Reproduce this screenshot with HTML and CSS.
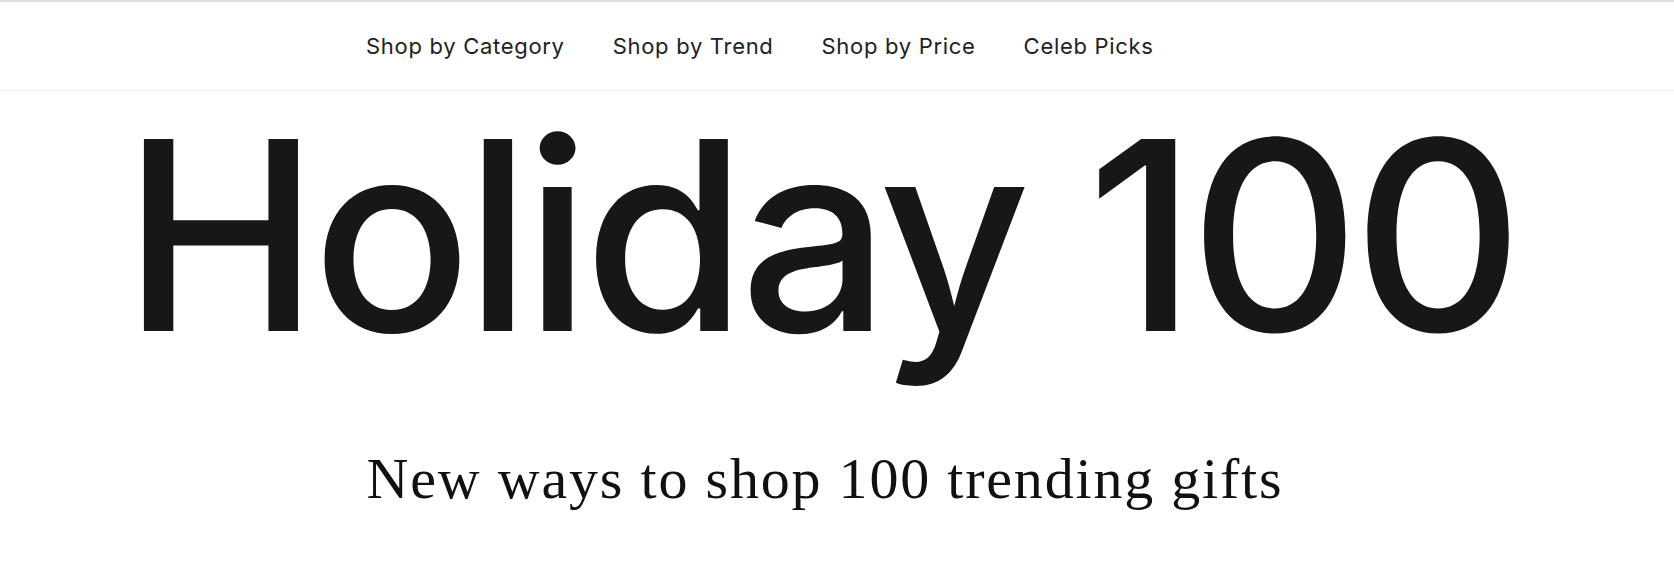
FILE: index.html
```html
<!DOCTYPE html>
<html lang="en">
<head>
    <meta charset="UTF-8">
    <meta name="viewport" content="width=device-width, initial-scale=1.0">
    <title>Holiday 100</title>
    <link rel="stylesheet" href="styles.css">
</head>
<body>
    <header class="topbar">
        <nav>
            <ul class="nav-links">
                <li><a href="#">Shop by Category</a></li>
                <li><a href="#">Shop by Trend</a></li>
                <li><a href="#">Shop by Price</a></li>
                <li><a href="#">Celeb Picks</a></li>
            </ul>
        </nav>
    </header>
    <main class="hero">
        <h1 class="hero-title">Holiday 100</h1>
        <p class="hero-subtitle">New ways to shop 100 trending gifts</p>
    </main>
</body>
</html>
```

FILE: styles.css
```css
html {
    background-color: #fff;
}
body {
    font-family: Inter, "Noto Sans", sans-serif;
    margin: 0;
    padding: 0;
    min-height: 563px;
    color: #171717;
    border-top: 2px solid #dedede;
}
.topbar {
    height: 88px;
    border-bottom: 1px solid #f2f2f2;
    display: flex;
    align-items: center;
    padding-left: 366px;
}
.nav-links {
    list-style: none;
    display: flex;
    gap: 48px;
    margin: 0;
    padding: 0;
}
.nav-links a {
    color: #202124;
    text-decoration: none;
    font-size: 22px;
    letter-spacing: 0.7px;
}
.hero {
    display: flex;
    flex-direction: column;
    align-items: center;
    padding: 0 35px 40px 0;
}
.hero-title {
    font-size: 264px;
    font-weight: 500;
    line-height: 1;
    letter-spacing: -7px;
    margin: 12px 0 0;
    color: #171717;
}
.hero-subtitle {
    font-family: "Liberation Serif", serif;
    font-size: 58px;
    letter-spacing: 1.8px;
    color: #111;
    margin: 77px 0 0 11px;
    line-height: 1.2;
}
```
